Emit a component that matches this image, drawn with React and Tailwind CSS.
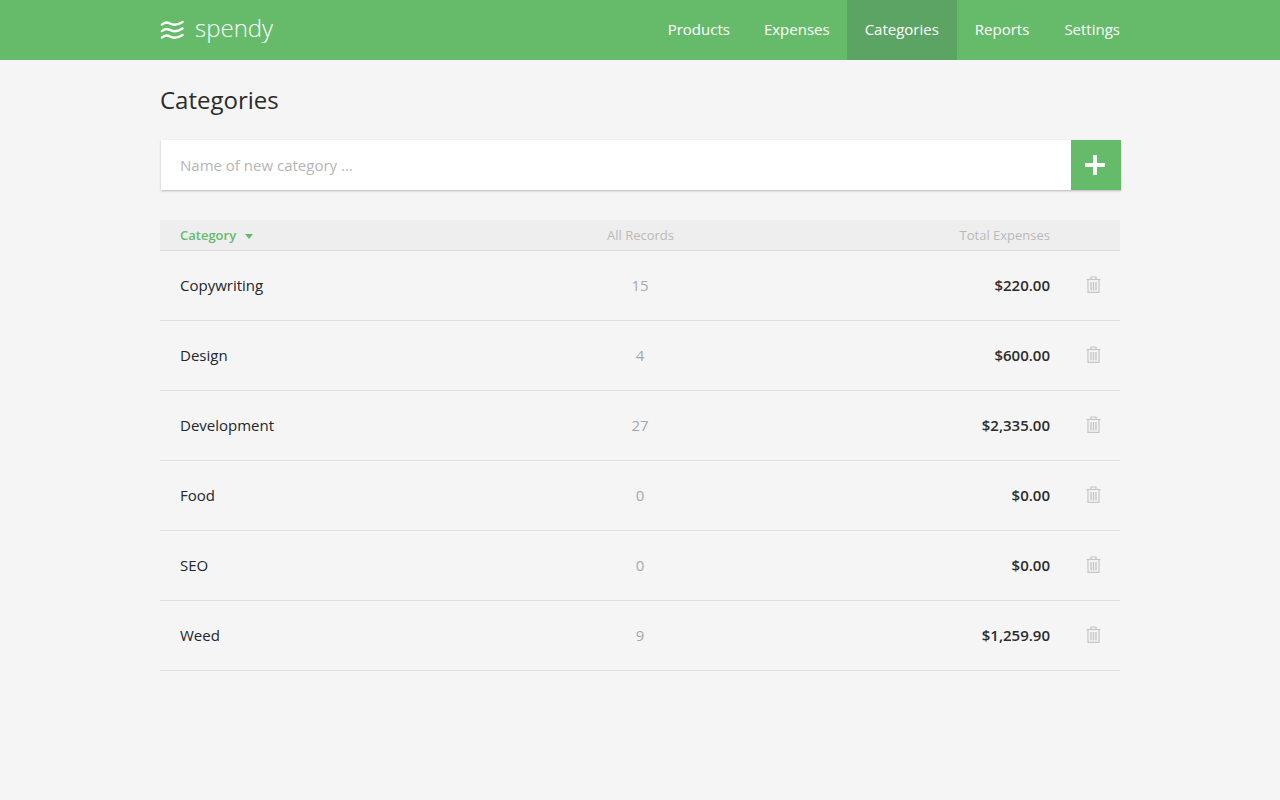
const navItems = ['Products', 'Expenses', 'Categories', 'Reports', 'Settings'];

const categories = [
    { name: 'Copywriting', records: 15, total: '$220.00' },
    { name: 'Design', records: 4, total: '$600.00' },
    { name: 'Development', records: 27, total: '$2,335.00' },
    { name: 'Food', records: 0, total: '$0.00' },
    { name: 'SEO', records: 0, total: '$0.00' },
    { name: 'Weed', records: 9, total: '$1,259.90' },
];

const Logo = () => (
    <svg width="24" height="20" viewBox="0 0 24 20" fill="none" stroke="white" strokeWidth="2.4" strokeLinecap="round">
        <path d="M2 4.5 C4.5 1.8 7 1.8 10 3.5 C13.5 5.5 17 5.5 22.5 2" />
        <path d="M2 11 C4.5 8.3 7 8.3 10 10 C13.5 12 17 12 22.5 8.5" />
        <path d="M2 17.5 C4.5 14.8 7 14.8 10 16.5 C13.5 18.5 17 18.5 22.5 15" />
    </svg>
);

const TrashIcon = () => (
    <svg width="15" height="17" viewBox="0 0 15 17" fill="none" stroke="#c6c6c6" strokeWidth="1.2">
        <path d="M0.5 3.5 H14.5" />
        <path d="M5 3.2 V1 H10 V3.2" />
        <path d="M2 3.5 V16.4 H13 V3.5" />
        <path d="M5 6 V14.5 M7.5 6 V14.5 M10 6 V14.5" strokeWidth="1.4" />
    </svg>
);

export default function App() {
    return (
        <div className="min-h-[800px] bg-[#f5f5f5] font-['Open_Sans',sans-serif] text-[#2c2c2c]">
            <header className="h-[60px] bg-[#66bb6a]">
                <div className="w-[960px] mx-auto h-full flex items-center justify-between">
                    <div className="flex items-center gap-[11px]">
                        <Logo />
                        <span className="text-[24px] leading-none font-light text-white relative -top-[2px]">spendy</span>
                    </div>
                    <nav className="flex h-full">
                        {navItems.map((item) => (
                            <a
                                key={item}
                                className={`flex items-center pl-[18px] pb-[2px] text-[15px] text-white ${item === 'Settings' ? 'pr-0' : item === 'Products' ? 'pr-[16px]' : item === 'Categories' ? 'pr-[18px]' : 'pr-[17px]'} ${item === 'Categories' ? 'bg-[#5ca463]' : ''}`}
                            >
                                {item}
                            </a>
                        ))}
                    </nav>
                </div>
            </header>

            <main className="w-[960px] mx-auto">
                <h1 className="pt-[24px] h-[80px] text-[24px] leading-[32px] font-normal">Categories</h1>

                <div className="flex h-[50px] w-[960px] ml-[1px] bg-white shadow-[0_1px_2px_rgba(0,0,0,0.25)]">
                    <input
                        type="text"
                        placeholder="Name of new category ..."
                        className="flex-1 pl-[19px] pr-5 text-[15px] bg-transparent outline-none placeholder:text-[#b5b5b5]"
                    />
                    <button className="w-[50px] pr-[2px] flex items-center justify-center bg-[#66bb6a]">
                        <svg width="20" height="20" viewBox="0 0 20 20" fill="white">
                            <path d="M8 0 H12 V8 H20 V12 H12 V20 H8 V12 H0 V8 H8 Z" />
                        </svg>
                    </button>
                </div>

                <div className="mt-[30px]">
                    <div className="grid grid-cols-[400px_160px_330px_70px] items-center h-[31px] pt-[2px] bg-[#eeeeee] border-b border-[#e0e0e0] text-[13px] text-[#b9b9b9]">
                        <div className="pl-5 flex items-center gap-[9px] font-semibold text-[#66bb6a]">
                            Category
                            <span className="w-0 h-0 border-x-[4px] border-x-transparent border-t-[5px] border-t-[#66bb6a]"></span>
                        </div>
                        <div className="text-center pl-[1px]">All Records</div>
                        <div className="text-right">Total Expenses</div>
                        <div></div>
                    </div>

                    {categories.map((category) => (
                        <div
                            key={category.name}
                            className="grid grid-cols-[400px_160px_330px_70px] items-center h-[70px] border-b border-[#e0e0e0] text-[15px]"
                        >
                            <div className="pl-5 text-[#22262e]">{category.name}</div>
                            <div className="text-center text-[#a5a9ad]">{category.records}</div>
                            <div className="text-right font-semibold">{category.total}</div>
                            <div className="pl-[36px] pb-[2px] flex items-center">
                                <TrashIcon />
                            </div>
                        </div>
                    ))}
                </div>
            </main>
        </div>
    );
}
